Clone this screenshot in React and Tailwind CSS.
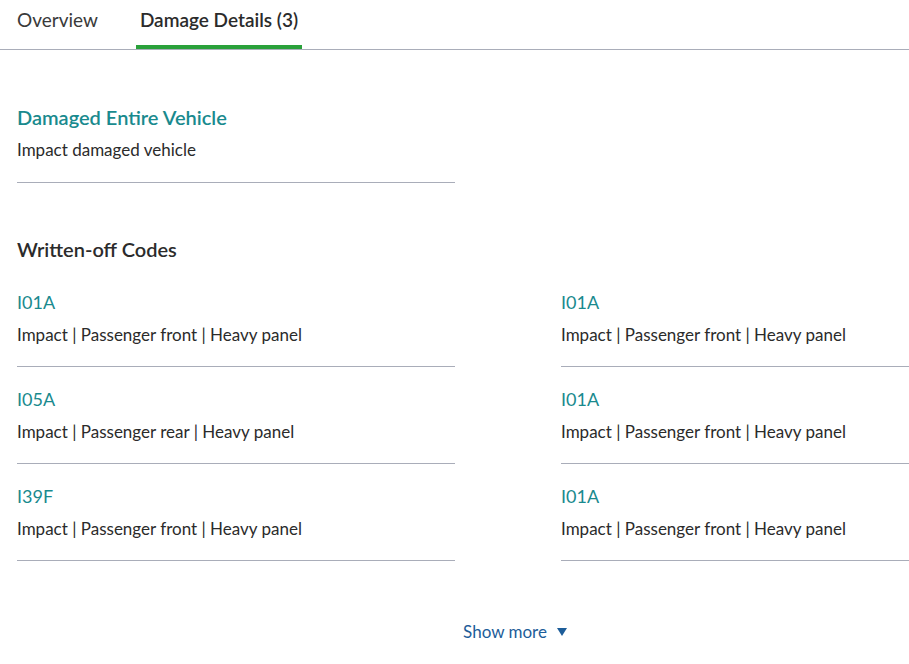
import React from "react";

const rows = [
  { l: { code: "I01A", desc: "Impact | Passenger front | Heavy panel" }, r: { code: "I01A", desc: "Impact | Passenger front | Heavy panel" } },
  { l: { code: "I05A", desc: "Impact | Passenger rear | Heavy panel" }, r: { code: "I01A", desc: "Impact | Passenger front | Heavy panel" } },
  { l: { code: "I39F", desc: "Impact | Passenger front | Heavy panel" }, r: { code: "I01A", desc: "Impact | Passenger front | Heavy panel" } },
];

function Item({ code, desc }) {
  return (
    <div className="h-[97px] border-b border-[#a9adb9] pt-[19px]">
      <div className="text-[18px] leading-[26px] text-[#198a8e]">{code}</div>
      <div className="mt-[8px] text-[17px] leading-[24px] text-[#2b2b2b]">{desc}</div>
    </div>
  );
}

export default function App() {
  return (
    <div className="w-[909px] h-[664px] overflow-hidden bg-white" style={{ fontFamily: "Lato, 'Open Sans', sans-serif" }}>
      <div className="flex h-[50px] border-b border-[#a9adb9] pl-[17px]">
        <div className="pt-[7px] text-[19px] leading-[26px] text-[#3a3a3a]">Overview</div>
        <div className="ml-[38px] flex flex-col">
          <div className="px-[4px] pt-[7px] text-[19px] leading-[26px] font-semibold text-[#2b2b2b]">Damage Details (3)</div>
          <div className="mt-auto h-[4px] bg-[#2aa13a]" />
        </div>
      </div>
      <div className="px-[17px]">
        <div className="w-[438px] border-b border-[#a9adb9] pt-[53px] h-[133px]">
          <div className="text-[20px] leading-[28px] font-semibold text-[#198a8e]">Damaged Entire Vehicle</div>
          <div className="mt-[7px] text-[17px] leading-[24px] text-[#2b2b2b]">Impact damaged vehicle</div>
        </div>
        <div className="pt-[52px] text-[20px] leading-[28px] font-semibold text-[#2b2b2b]">Written-off Codes</div>
        <div className="mt-[7px] grid w-[982px] grid-cols-[438px_438px] gap-x-[106px]">
          {rows.map((row, i) => (
            <React.Fragment key={i}>
              <Item {...row.l} />
              <Item {...row.r} />
            </React.Fragment>
          ))}
        </div>
        <div className="flex w-[996px] justify-center pt-[59px]">
          <button className="flex items-center gap-[10px] text-[17px] leading-[24px] text-[#1d5d99]">
            Show more
            <svg width="10" height="8" viewBox="0 0 10 8"><path d="M0 0H10L5 8Z" fill="#1d5d99" /></svg>
          </button>
        </div>
      </div>
    </div>
  );
}
